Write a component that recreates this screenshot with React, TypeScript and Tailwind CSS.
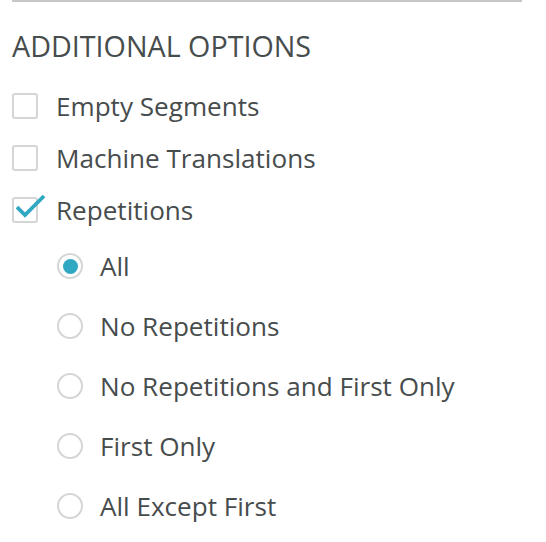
import React from "react";

const checks = [
  { label: "Empty Segments", checked: false },
  { label: "Machine Translations", checked: false },
  { label: "Repetitions", checked: true },
];

const radios = [
  { label: "All", checked: true },
  { label: "No Repetitions", checked: false },
  { label: "No Repetitions and First Only", checked: false },
  { label: "First Only", checked: false },
  { label: "All Except First", checked: false },
];

function CheckBox({ checked }: { checked: boolean }) {
  return (
    <span className="relative flex h-[26px] w-[26px] shrink-0 rounded-[3px] border-2 border-[#d4d6d6] bg-white">
      {checked && (
        <svg
          className="absolute left-[2px] top-[-9px]"
          width="32"
          height="30"
          viewBox="0 0 32 30"
          fill="none"
        >
          <path
            d="M1 17 L9 25 L28 6"
            stroke="#31a8c2"
            strokeWidth="3.8"
            strokeLinecap="butt"
            strokeLinejoin="miter"
          />
        </svg>
      )}
    </span>
  );
}

function Radio({ checked }: { checked: boolean }) {
  return (
    <span className="flex h-[26px] w-[26px] shrink-0 items-center justify-center rounded-full border-2 border-[#d4d6d6] bg-white">
      {checked && <span className="h-[15px] w-[15px] rounded-full bg-[#31a8c2]" />}
    </span>
  );
}

export default function App() {
  return (
    <div
      className="h-[542px] w-[546px] bg-white pl-[12px] pr-[24px] text-[#474c4d]"
      style={{ fontFamily: '"Open Sans", sans-serif' }}
    >
      <div className="h-[2px] w-full bg-[#c8c8c8]" />
      <h2 className="mt-[26px] text-[28.7px] leading-[36px] font-normal">
        ADDITIONAL OPTIONS
      </h2>
      <div className="mt-[27px] flex flex-col gap-[22px]">
        {checks.map((c) => (
          <label key={c.label} className="flex h-[30px] items-center gap-[18px]">
            <CheckBox checked={c.checked} />
            <span className="text-[26.1px] leading-[30px]">{c.label}</span>
          </label>
        ))}
      </div>
      <div className="mt-[26px] flex flex-col gap-[30px] pl-[45px]">
        {radios.map((r) => (
          <label key={r.label} className="flex h-[30px] items-center gap-[17px]">
            <Radio checked={r.checked} />
            <span className="text-[26.1px] leading-[30px]">{r.label}</span>
          </label>
        ))}
      </div>
    </div>
  );
}
